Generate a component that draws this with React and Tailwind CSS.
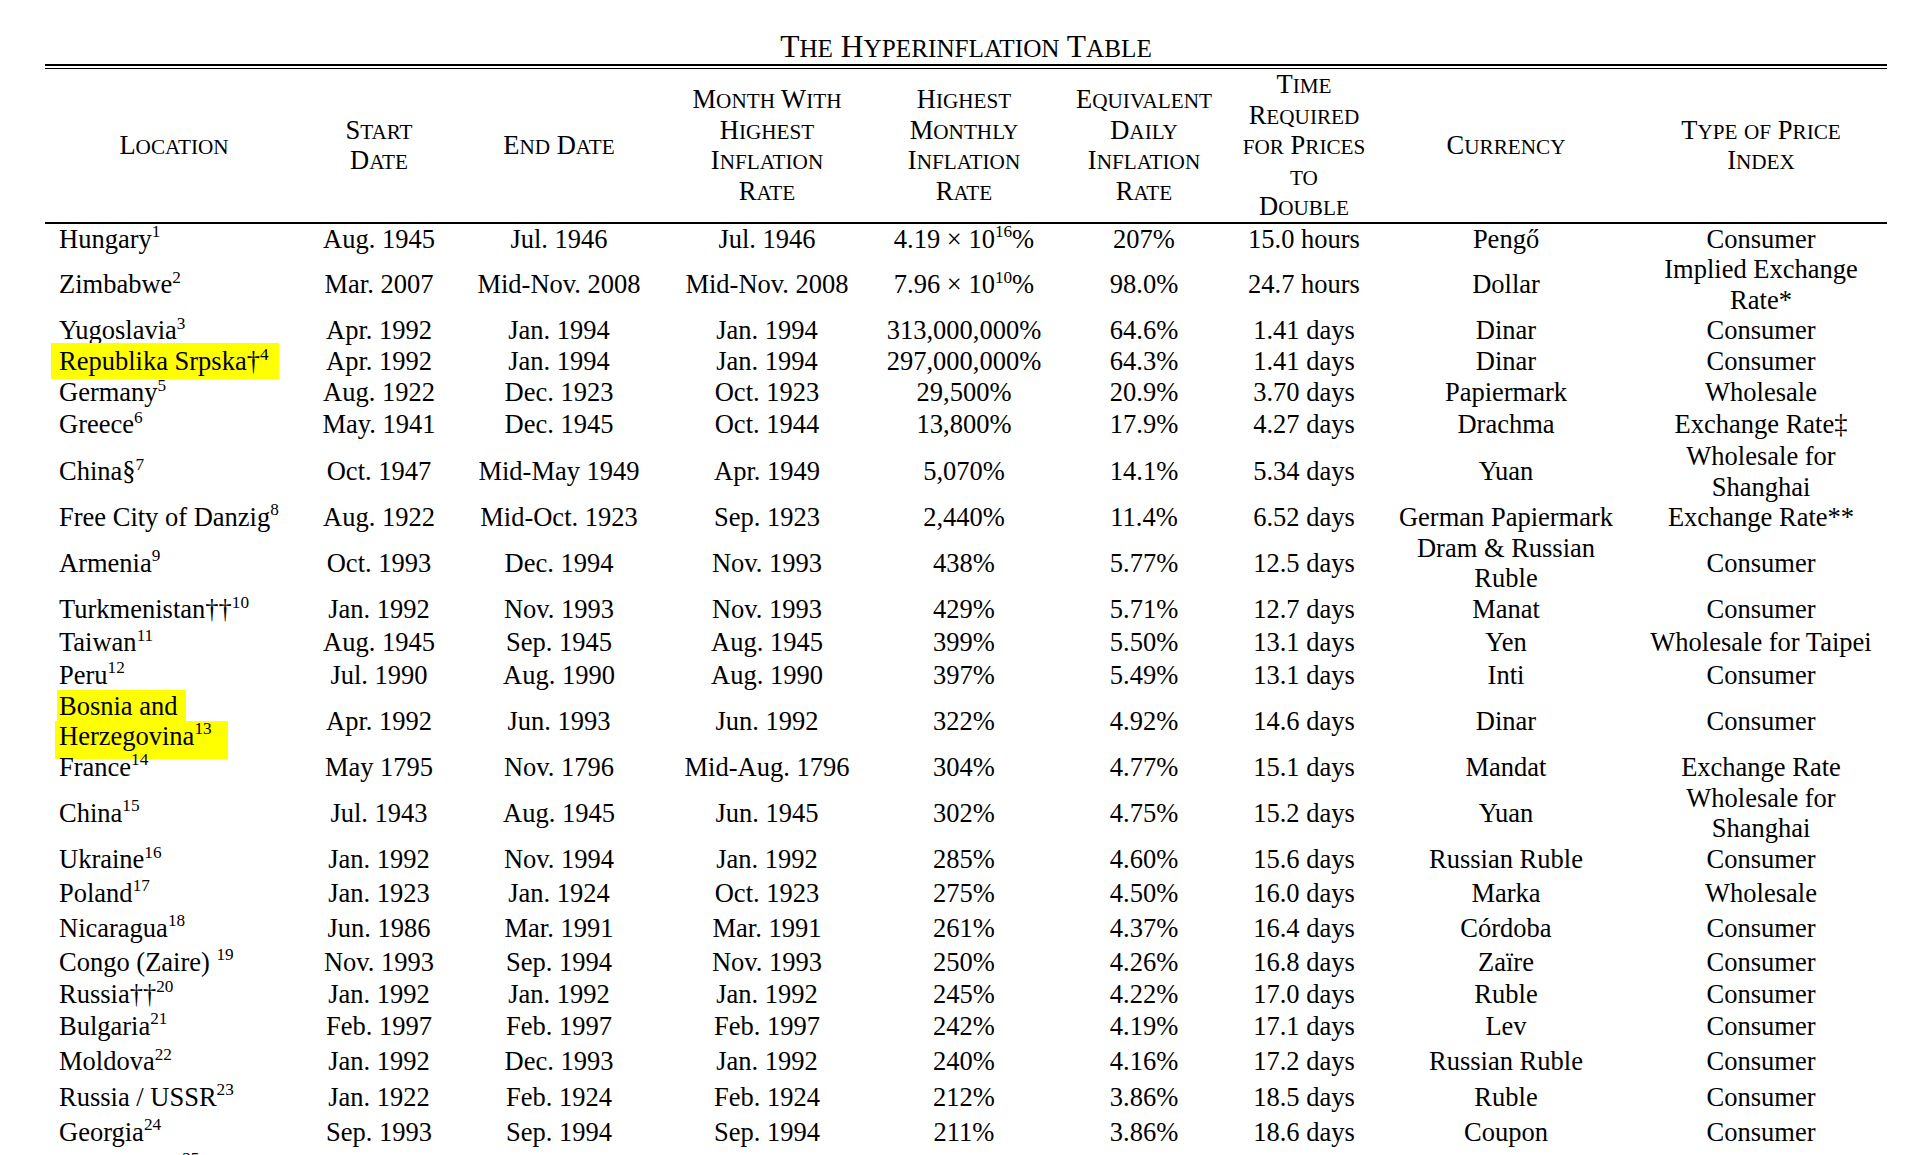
import React from 'react';

// small caps the way the PDF sets them: capitals at full size, the rest at 0.8em
function sc(text) {
  const parts = [];
  let buf = '';
  let small = false;
  const flush = (i) => {
    if (!buf) return;
    parts.push(
      small ? (
        <span key={i} className="text-[0.8em] leading-none">{buf.toUpperCase()}</span>
      ) : (
        <span key={i}>{buf}</span>
      )
    );
    buf = '';
  };
  [...text].forEach((ch, i) => {
    const isSmall = ch >= 'a' && ch <= 'z';
    if (isSmall !== small) {
      flush(i);
      small = isSmall;
    }
    buf += ch;
  });
  flush(text.length);
  return parts;
}

const Sup = ({ children }) => (
  <sup className="text-[0.65em] -top-[0.62em]">{children}</sup>
);

const Lines = ({ lines }) =>
  lines.map((l, i) => (
    <React.Fragment key={i}>
      {i > 0 && <br />}
      {l}
    </React.Fragment>
  ));

const headers = [
  ['Location'],
  ['Start', 'Date'],
  ['End Date'],
  ['Month With', 'Highest', 'Inflation', 'Rate'],
  ['Highest', 'Monthly', 'Inflation', 'Rate'],
  ['Equivalent', 'Daily', 'Inflation', 'Rate'],
  ['Time', 'Required', 'for Prices', 'to', 'Double'],
  ['Currency'],
  ['Type of Price', 'Index'],
];

const colWidths = [258, 152, 208, 208, 186, 174, 146, 258, 252];

const rows = [
  { h: 31, loc: <>Hungary<Sup>1</Sup></>, d: ['Aug. 1945', 'Jul. 1946', 'Jul. 1946', <>4.19 × 10<Sup>16</Sup>%</>, '207%', '15.0 hours', 'Pengő', 'Consumer'] },
  { h: 60, loc: <>Zimbabwe<Sup>2</Sup></>, d: ['Mar. 2007', 'Mid-Nov. 2008', 'Mid-Nov. 2008', <>7.96 × 10<Sup>10</Sup>%</>, '98.0%', '24.7 hours', 'Dollar', ['Implied Exchange', 'Rate*']] },
  { h: 31, loc: <>Yugoslavia<Sup>3</Sup></>, d: ['Apr. 1992', 'Jan. 1994', 'Jan. 1994', '313,000,000%', '64.6%', '1.41 days', 'Dinar', 'Consumer'] },
  {
    h: 31,
    loc: (
      <span className="bg-[#ffff00] -ml-2 pl-2 pr-2.5 py-[3px]">
        Republika Srpska†<Sup>4</Sup>
      </span>
    ),
    d: ['Apr. 1992', 'Jan. 1994', 'Jan. 1994', '297,000,000%', '64.3%', '1.41 days', 'Dinar', 'Consumer'],
  },
  { h: 31, loc: <>Germany<Sup>5</Sup></>, d: ['Aug. 1922', 'Dec. 1923', 'Oct. 1923', '29,500%', '20.9%', '3.70 days', 'Papiermark', 'Wholesale'] },
  { h: 33, loc: <>Greece<Sup>6</Sup></>, d: ['May. 1941', 'Dec. 1945', 'Oct. 1944', '13,800%', '17.9%', '4.27 days', 'Drachma', 'Exchange Rate‡'] },
  { h: 61, loc: <>China§<Sup>7</Sup></>, d: ['Oct. 1947', 'Mid-May 1949', 'Apr. 1949', '5,070%', '14.1%', '5.34 days', 'Yuan', ['Wholesale for', 'Shanghai']] },
  { h: 30, loc: <>Free City of Danzig<Sup>8</Sup></>, d: ['Aug. 1922', 'Mid-Oct. 1923', 'Sep. 1923', '2,440%', '11.4%', '6.52 days', 'German Papiermark', 'Exchange Rate**'] },
  { h: 61, loc: <>Armenia<Sup>9</Sup></>, d: ['Oct. 1993', 'Dec. 1994', 'Nov. 1993', '438%', '5.77%', '12.5 days', ['Dram & Russian', 'Ruble'], 'Consumer'] },
  { h: 32, loc: <>Turkmenistan††<Sup>10</Sup></>, d: ['Jan. 1992', 'Nov. 1993', 'Nov. 1993', '429%', '5.71%', '12.7 days', 'Manat', 'Consumer'] },
  { h: 34, loc: <>Taiwan<Sup>11</Sup></>, d: ['Aug. 1945', 'Sep. 1945', 'Aug. 1945', '399%', '5.50%', '13.1 days', 'Yen', 'Wholesale for Taipei'] },
  { h: 31, loc: <>Peru<Sup>12</Sup></>, d: ['Jul. 1990', 'Aug. 1990', 'Aug. 1990', '397%', '5.49%', '13.1 days', 'Inti', 'Consumer'] },
  {
    h: 61,
    loc: (
      <>
        <span className="bg-[#ffff00] -ml-0.5 pl-0.5 pr-2 pt-[1px]">Bosnia and</span>
        <br />
        <span className="bg-[#ffff00] -ml-1 pl-1 pr-4 pb-[8px]">
          Herzegovina<Sup>13</Sup>
        </span>
      </>
    ),
    d: ['Apr. 1992', 'Jun. 1993', 'Jun. 1992', '322%', '4.92%', '14.6 days', 'Dinar', 'Consumer'],
  },
  { h: 31, loc: <>France<Sup>14</Sup></>, d: ['May 1795', 'Nov. 1796', 'Mid-Aug. 1796', '304%', '4.77%', '15.1 days', 'Mandat', 'Exchange Rate'] },
  { h: 61, loc: <>China<Sup>15</Sup></>, d: ['Jul. 1943', 'Aug. 1945', 'Jun. 1945', '302%', '4.75%', '15.2 days', 'Yuan', ['Wholesale for', 'Shanghai']] },
  { h: 32, loc: <>Ukraine<Sup>16</Sup></>, d: ['Jan. 1992', 'Nov. 1994', 'Jan. 1992', '285%', '4.60%', '15.6 days', 'Russian Ruble', 'Consumer'] },
  { h: 35, loc: <>Poland<Sup>17</Sup></>, d: ['Jan. 1923', 'Jan. 1924', 'Oct. 1923', '275%', '4.50%', '16.0 days', 'Marka', 'Wholesale'] },
  { h: 35, loc: <>Nicaragua<Sup>18</Sup></>, d: ['Jun. 1986', 'Mar. 1991', 'Mar. 1991', '261%', '4.37%', '16.4 days', 'Córdoba', 'Consumer'] },
  { h: 33, loc: <>Congo (Zaire) <Sup>19</Sup></>, d: ['Nov. 1993', 'Sep. 1994', 'Nov. 1993', '250%', '4.26%', '16.8 days', 'Zaïre', 'Consumer'] },
  { h: 30, loc: <>Russia††<Sup>20</Sup></>, d: ['Jan. 1992', 'Jan. 1992', 'Jan. 1992', '245%', '4.22%', '17.0 days', 'Ruble', 'Consumer'] },
  { h: 34, loc: <>Bulgaria<Sup>21</Sup></>, d: ['Feb. 1997', 'Feb. 1997', 'Feb. 1997', '242%', '4.19%', '17.1 days', 'Lev', 'Consumer'] },
  { h: 37, loc: <>Moldova<Sup>22</Sup></>, d: ['Jan. 1992', 'Dec. 1993', 'Jan. 1992', '240%', '4.16%', '17.2 days', 'Russian Ruble', 'Consumer'] },
  { h: 34, loc: <>Russia / USSR<Sup>23</Sup></>, d: ['Jan. 1922', 'Feb. 1924', 'Feb. 1924', '212%', '3.86%', '18.5 days', 'Ruble', 'Consumer'] },
  { h: 36, loc: <>Georgia<Sup>24</Sup></>, d: ['Sep. 1993', 'Sep. 1994', 'Sep. 1994', '211%', '3.86%', '18.6 days', 'Coupon', 'Consumer'] },
  { h: 32, loc: <>Tatarstan††<Sup>25</Sup></>, d: ['Jan. 1992', 'Feb. 1992', 'Jan. 1992', '211%', '3.86%', '18.6 days', 'Ruble', 'Consumer'] },
];

export default function App() {
  return (
    <div className="min-h-screen bg-white pl-[45px] pt-[29px] text-black font-['Liberation_Serif','Times_New_Roman',serif]">
      <h1 className="w-[1842px] text-center text-[31.5px] leading-[35px] font-normal">
        {sc('The Hyperinflation Table')}
      </h1>
      <div className="w-[1842px] h-[5px] border-t-2 border-b border-black" />
      <table className="w-[1842px] table-fixed border-collapse text-[26.5px] leading-[30.5px]">
        <colgroup>
          {colWidths.map((w, i) => (
            <col key={i} style={{ width: w }} />
          ))}
        </colgroup>
        <thead>
          <tr>
            {headers.map((lines, i) => (
              <th
                key={i}
                className="p-0 h-[153px] align-middle text-center font-normal whitespace-nowrap border-b-2 border-black"
              >
                <Lines lines={lines.map((l) => sc(l))} />
              </th>
            ))}
          </tr>
        </thead>
        <tbody>
          {rows.map((r, i) => (
            <tr key={i} style={{ height: r.h }}>
              <td className="p-0 pl-[14px] text-left align-middle whitespace-nowrap">{r.loc}</td>
              {r.d.map((c, j) => (
                <td key={j} className="p-0 text-center align-middle whitespace-nowrap">
                  {Array.isArray(c) ? <Lines lines={c} /> : c}
                </td>
              ))}
            </tr>
          ))}
        </tbody>
      </table>
    </div>
  );
}
